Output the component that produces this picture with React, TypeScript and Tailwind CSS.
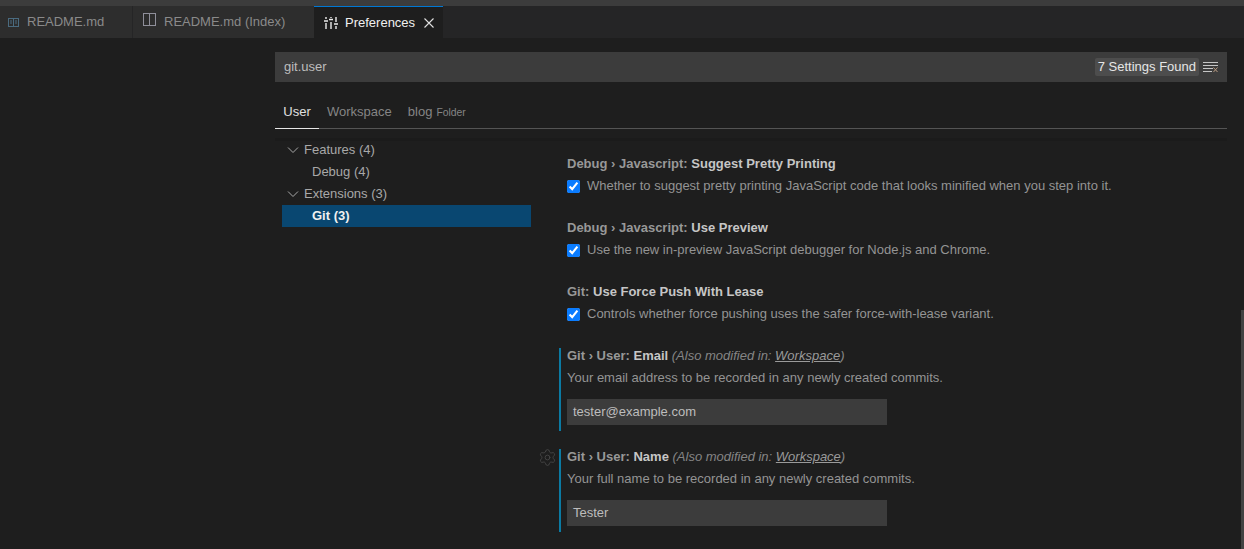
import { Settings } from 'lucide-react';

const font = "font-['Liberation_Sans',Arial,sans-serif]";

function BoolSetting({ prefix, name, text }: { prefix: string; name: string; text: string }) {
    return (
        <div className="h-[64px] pl-[567px] pt-[14px]">
            <div className="h-[22px] leading-[22px] font-bold text-[#989898]">
                {prefix} <span className="text-[#c6c6c6]">{name}</span>
            </div>
            <div className="flex h-[22px] items-center">
                <input type="checkbox" checked readOnly className="m-0 h-[13px] w-[13px] accent-[#0a7cff]" />
                <span className="ml-[7px] text-[#949494]">{text}</span>
            </div>
        </div>
    );
}

function TextSetting({ name, text, value, gear }: { name: string; text: string; value: string; gear?: boolean }) {
    return (
        <div className="relative mb-[18px] ml-[559px] h-[83px] w-[400px] border-l-2 border-l-[#0b7aa3] pl-[6px]">
            {gear && <Settings size={19} strokeWidth={1} className="absolute -left-[23px] -top-[1px] text-[#4c4c4c]" />}
            <div className="h-[16px] leading-[16px] text-[#989898]">
                <span className="font-bold">Git › User: <span className="text-[#c6c6c6]">{name}</span></span>
                <span className="italic text-[#858585]"> (Also modified in: <span className="underline text-[#9a9a9a]">Workspace</span>)</span>
            </div>
            <div className="mt-[6px] h-[16px] leading-[16px] text-[#949494]">{text}</div>
            <div className="mt-[13px] flex h-[26px] w-[320px] items-center bg-[#3c3c3c] px-[6px] text-[#bdbdbd]">{value}</div>
        </div>
    );
}

function TreeRow({ label, indent, open, active }: { label: string; indent: string; open?: boolean; active?: boolean }) {
    return (
        <div className={`flex h-[22px] items-center ${indent} ${active ? 'bg-[#094771] font-bold text-[#f0f0f0]' : 'text-[#a8a8a8]'}`}>
            {open && (
                <svg width="12" height="12" viewBox="0 0 12 12" className="mr-[5px] -ml-[1px]" fill="none" stroke="#a8a8a8">
                    <path d="M1 3.5 6 8.5 11 3.5" />
                </svg>
            )}
            {label}
        </div>
    );
}

export default function App() {
    return (
        <div className={`relative h-[549px] w-[1244px] overflow-hidden bg-[#1e1e1e] text-[13px] ${font}`}>
            {/* Top strip */}
            <div className="h-[6px] bg-[#3c3c3c]" />

            {/* Editor tabs */}
            <div className="flex h-[32px] bg-[#252526]">
                <div className="flex w-[133px] items-center border-r border-r-[#252526] bg-[#2d2d2d] pl-[8px] text-[#8a8a8a]">
                    <svg width="11" height="9" viewBox="0 0 11 9" className="mr-[8px]" fill="none" stroke="#4a6b80">
                        <rect x="0.5" y="0.5" width="10" height="8" />
                        <path d="M5.5 1v7M2 3h2M2 5h2M7 3h2M7 5h2" />
                    </svg>
                    README.md
                </div>
                <div className="flex w-[181px] items-center bg-[#2d2d2d] pl-[10px] text-[#8a8a8a]">
                    <svg width="14" height="14" viewBox="0 0 14 14" className="mr-[7px] -mt-[4px]" fill="none" stroke="#8f8f9a">
                        <rect x="0.5" y="0.5" width="12" height="12" />
                        <path d="M6.5 1v11" />
                    </svg>
                    README.md (Index)
                </div>
                <div className="flex w-[129px] items-center border-t border-t-[#0078d4] bg-[#1e1e1e] pl-[9px] text-[#f0f0f0]">
                    <svg width="16" height="14" viewBox="0 0 16 14" className="mr-[6px]" fill="none" stroke="#ececec" strokeWidth="1.4">
                        <path d="M3 1v2M3 7v6M8 1v1M8 6v7M13 1v5M13 10v3M1 5h4M6 3.5h4M11 8h4" />
                    </svg>
                    Preferences
                    <svg width="10" height="10" viewBox="0 0 10 10" className="ml-[9px]" fill="none" stroke="#e0e0e0" strokeWidth="1.1">
                        <path d="M0.5 0.5 9.5 9.5M9.5 0.5 0.5 9.5" />
                    </svg>
                </div>
            </div>

            {/* Search box */}
            <div className="mx-[17px] ml-[275px] mt-[14px] flex h-[30px] items-center bg-[#3c3c3c] pl-[9px] pr-[8px] text-[#bdbdbd]">
                git.user
                <span className="ml-auto rounded-[2px] bg-[#4d4d4d] px-[3px] leading-[18px] text-[#e6e6e6]">7 Settings Found</span>
                <svg width="16" height="16" viewBox="0 0 16 16" className="ml-[4px]" fill="none" stroke="#c5c5c5">
                    <path d="M0 3.5h15M0 6.5h15M0 9.5h10M0 12.5h9" />
                    <path d="M10.5 8.5l4 4.5M14.5 8.5l-4 4.5" stroke="#b89a80" />
                </svg>
            </div>

            {/* Scope tabs */}
            <div className="ml-[275px] mr-[17px] mt-[12px] flex h-[35px] border-b border-b-[#545454]">
                <div className="flex h-[35px] w-[44px] items-center justify-center border-b border-b-[#e7e7e7] pt-[2px] text-[#e0e0e0]">User</div>
                <div className="ml-[8px] flex items-center pt-[2px] text-[#858585]">Workspace</div>
                <div className="ml-[16px] flex items-center pt-[2px] text-[#858585]">
                    blog<span className="ml-[4px] mt-[1px] text-[10.4px]">Folder</span>
                </div>
            </div>

            {/* Sticky shadow under the scope tabs */}
            <div className="absolute left-[275px] right-[17px] top-[138px] h-[3px] bg-[#1b1b1b]" />

            <div className="flex">
                {/* Tree */}
                <div className="relative ml-[282px] mt-[10px] h-[90px] w-[249px] shrink-0">
                    <TreeRow label="Features (4)" indent="pl-[6px]" open />
                    <TreeRow label="Debug (4)" indent="pl-[30px]" />
                    <TreeRow label="Extensions (3)" indent="pl-[6px]" open />
                    <TreeRow label="Git (3)" indent="pl-[30px]" active />
                </div>
            </div>

            {/* Settings list */}
            <div className="absolute left-0 top-[139px] w-full">
                <BoolSetting prefix="Debug › Javascript:" name="Suggest Pretty Printing" text="Whether to suggest pretty printing JavaScript code that looks minified when you step into it." />
                <BoolSetting prefix="Debug › Javascript:" name="Use Preview" text="Use the new in-preview JavaScript debugger for Node.js and Chrome." />
                <BoolSetting prefix="Git:" name="Use Force Push With Lease" text="Controls whether force pushing uses the safer force-with-lease variant." />
                <div className="h-[17px]" />
                <TextSetting name="Email" text="Your email address to be recorded in any newly created commits." value="tester@example.com" />
                <TextSetting name="Name" text="Your full name to be recorded in any newly created commits." value="Tester" gear />
            </div>

            {/* Scrollbar */}
            <div className="absolute right-0 top-[310px] h-[239px] w-[3px] bg-[#424242]" />
        </div>
    );
}
